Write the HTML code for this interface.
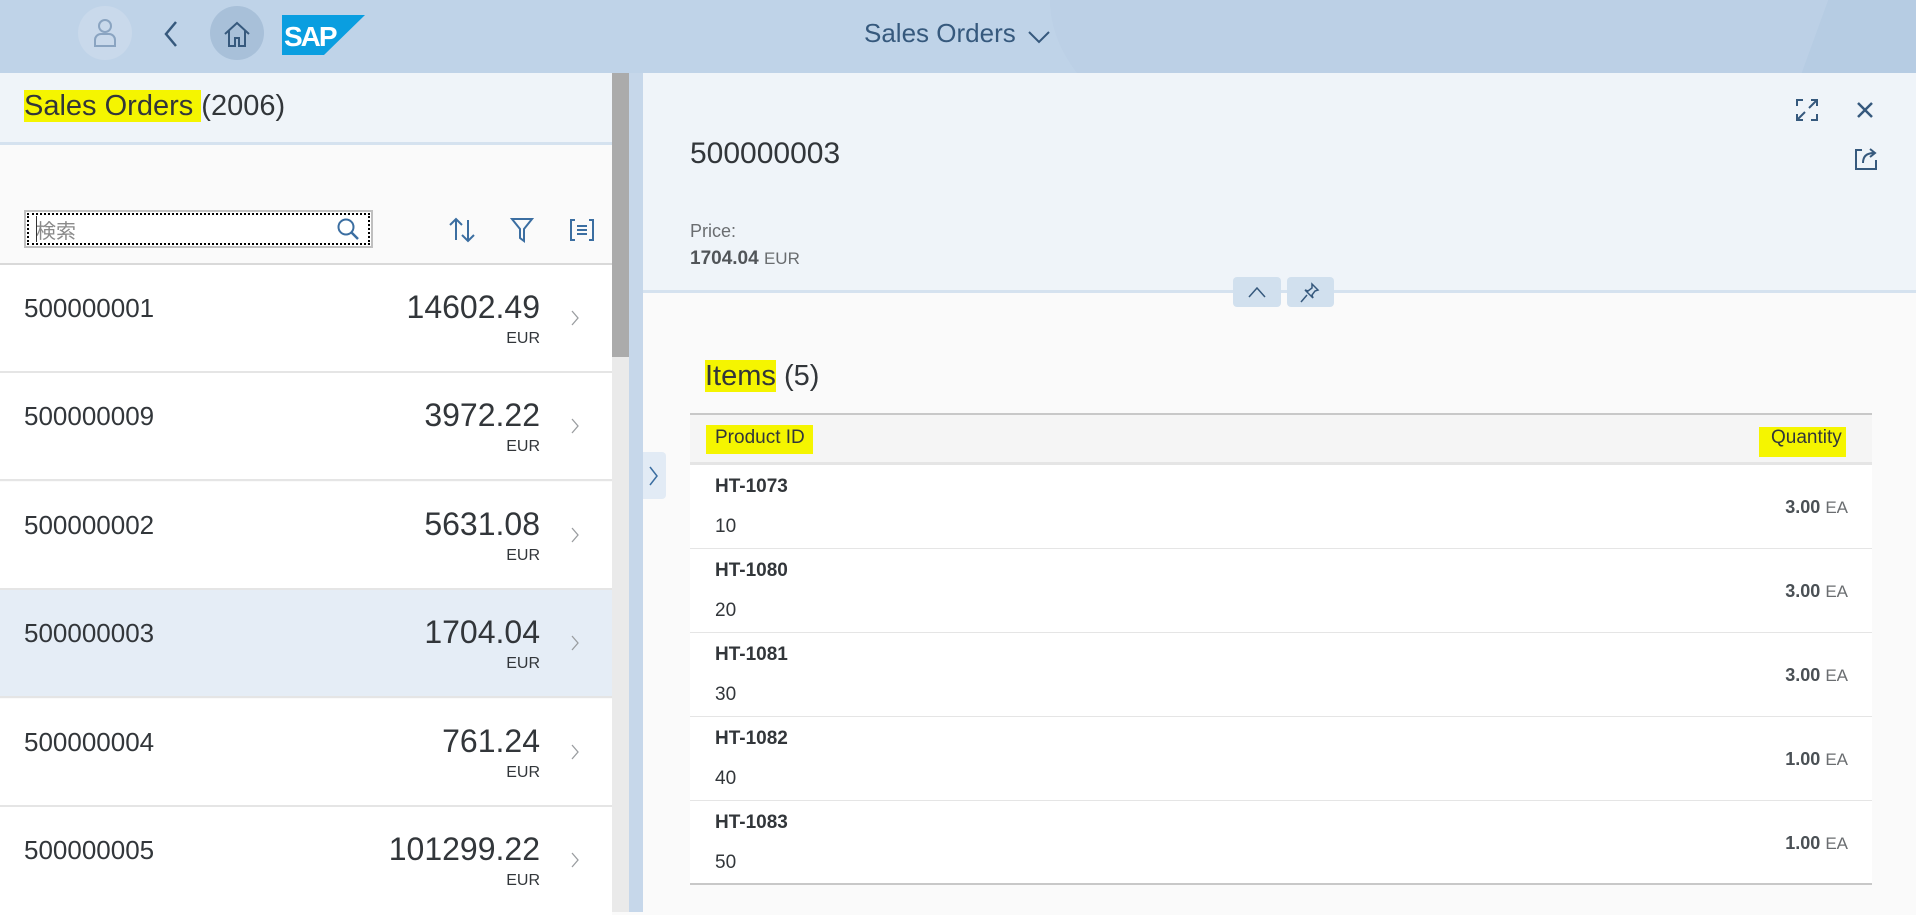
<!DOCTYPE html>
<html><head><meta charset="utf-8"><style>
*{box-sizing:border-box;margin:0;padding:0}
body{width:1916px;height:912px;overflow:hidden;font-family:"Liberation Sans","Noto Sans CJK JP",sans-serif;color:#32363a;background:#fafafa;position:relative}
.abs{position:absolute}
.hl{background:#f5f500}
.row{position:absolute;left:0;width:612px;height:108px;border-bottom:2px solid #e5e5e5;background:#fff}
.row .id{position:absolute;left:24px;top:28px;font-size:26px}
.row .amt{position:absolute;right:72px;top:24px;font-size:32px}
.row .cur{position:absolute;right:72px;top:65px;font-size:16px}
.row .chev{position:absolute;left:570px;top:44px}
.trow{position:absolute;left:690px;width:1182px;height:84px;border-bottom:1px solid #e5e5e5;background:#fff}
.trow .p{position:absolute;left:25px;top:11px;font-size:19px;font-weight:bold}
.trow .n{position:absolute;left:25px;top:51px;font-size:19px}
.trow .q{position:absolute;right:24px;top:32px;font-size:18px;font-weight:bold;color:#4a5055}
.trow .q span{font-weight:normal;font-size:17px;color:#6a6d70}
</style></head><body>
<div class="abs" style="left:0;top:0;width:1916px;height:73px;background:#bfd3e8;overflow:hidden">
 <div class="abs" style="left:1050px;top:-200px;width:780px;height:400px;border-radius:50%;background:#bcd0e6"></div>
 <div class="abs" style="left:1810px;top:-100px;width:300px;height:300px;background:#b6cce3;transform:skewX(-20deg)"></div>
 <div class="abs" style="left:78px;top:6px;width:54px;height:54px;border-radius:50%;background:#c9d9eb"></div>
 <svg class="abs" style="left:92px;top:18px" width="26" height="30" viewBox="0 0 26 30"><circle cx="13" cy="8" r="6" fill="none" stroke="#8aa4c1" stroke-width="2"/><path d="M3 28v-6a6 6 0 0 1 6-6h8a6 6 0 0 1 6 6v6z" fill="none" stroke="#8aa4c1" stroke-width="2"/></svg>
 <svg class="abs" style="left:162px;top:20px" width="18" height="28"><path d="M14 2L4 14l10 12" fill="none" stroke="#36597d" stroke-width="2.5"/></svg>
 <div class="abs" style="left:210px;top:6px;width:54px;height:54px;border-radius:50%;background:#a8c0d9"></div>
 <svg class="abs" style="left:222px;top:20px" width="30" height="28" viewBox="0 0 30 28"><path d="M3 14L15 3l12 11M7 11v15h6v-8h4v8h6V11" fill="none" stroke="#36597d" stroke-width="2"/></svg>
 <svg class="abs" style="left:282px;top:15px" width="83" height="40" viewBox="0 0 83 40"><path d="M0 0h83L42 40H0z" fill="#0a9ee0"/><text x="2" y="31" font-family="Liberation Sans" font-weight="bold" font-size="28" fill="#fff" letter-spacing="-2">SAP</text></svg>
 <div class="abs" style="left:864px;top:18px;font-size:26px;color:#36597d">Sales Orders</div>
 <svg class="abs" style="left:1028px;top:30px" width="22" height="14"><path d="M1 2l10 10 10-10" fill="none" stroke="#36597d" stroke-width="2"/></svg>
</div>
<div class="abs" style="left:0;top:73px;width:612px;height:72px;background:#eff4f9;border-bottom:3px solid #d5e2ef"></div>
<div class="abs" style="left:24px;top:90px;font-size:29px"><span class="hl">Sales Orders </span>(2006)</div>
<div class="abs" style="left:0;top:147px;width:612px;height:118px;background:#fafafa;border-bottom:2px solid #d9d9d9"></div>
<div class="abs" style="left:24px;top:210px;width:349px;height:38px;background:#fff;border:2px solid #bfbfbf;outline:2px dotted #000;outline-offset:-5px"></div>
<div class="abs" style="left:36px;top:215px;font-size:20px;color:#8a8a8a">検索</div>
<div class="abs" style="left:36px;top:216px;width:1px;height:26px;background:#333"></div>
<svg class="abs" style="left:336px;top:217px" width="24" height="24"><circle cx="10" cy="10" r="7.5" fill="none" stroke="#3b6ea1" stroke-width="2"/><path d="M15.5 15.5L22 22" stroke="#3b6ea1" stroke-width="2.5"/></svg>
<svg class="abs" style="left:448px;top:216px" width="28" height="28"><path d="M8 24V3M2 9l6-6 6 6M20 4v21M14 19l6 6 6-6" fill="none" stroke="#3b6ea1" stroke-width="2"/></svg>
<svg class="abs" style="left:510px;top:216px" width="24" height="28"><path d="M2 3h20l-8 10v12l-4-3V13z" fill="none" stroke="#3b6ea1" stroke-width="2"/></svg>
<svg class="abs" style="left:569px;top:218px" width="26" height="24"><path d="M6 2H2v20h4M20 2h4v20h-4M8 8h10M8 12h10M8 16h10" fill="none" stroke="#3b6ea1" stroke-width="2"/></svg>

<div class="row" style="top:265px"><div class="id">500000001</div><div class="amt">14602.49</div><div class="cur">EUR</div><svg class="chev" width="10" height="18"><path d="M2 2l6 7-6 7" fill="none" stroke="#9a9da0" stroke-width="1.3"/></svg></div>
<div class="row" style="top:373px"><div class="id">500000009</div><div class="amt">3972.22</div><div class="cur">EUR</div><svg class="chev" width="10" height="18"><path d="M2 2l6 7-6 7" fill="none" stroke="#9a9da0" stroke-width="1.3"/></svg></div>
<div class="row" style="top:482px"><div class="id">500000002</div><div class="amt">5631.08</div><div class="cur">EUR</div><svg class="chev" width="10" height="18"><path d="M2 2l6 7-6 7" fill="none" stroke="#9a9da0" stroke-width="1.3"/></svg></div>
<div class="row" style="top:590px;background:#e5edf6"><div class="id">500000003</div><div class="amt">1704.04</div><div class="cur">EUR</div><svg class="chev" width="10" height="18"><path d="M2 2l6 7-6 7" fill="none" stroke="#9a9da0" stroke-width="1.3"/></svg></div>
<div class="row" style="top:699px"><div class="id">500000004</div><div class="amt">761.24</div><div class="cur">EUR</div><svg class="chev" width="10" height="18"><path d="M2 2l6 7-6 7" fill="none" stroke="#9a9da0" stroke-width="1.3"/></svg></div>
<div class="row" style="top:807px;border-bottom:none"><div class="id">500000005</div><div class="amt">101299.22</div><div class="cur">EUR</div><svg class="chev" width="10" height="18"><path d="M2 2l6 7-6 7" fill="none" stroke="#9a9da0" stroke-width="1.3"/></svg></div>

<div class="abs" style="left:612px;top:73px;width:17px;height:839px;background:#eaeaea"></div>
<div class="abs" style="left:612px;top:73px;width:17px;height:284px;background:#ababab"></div>
<div class="abs" style="left:629px;top:73px;width:14px;height:839px;background:#c6d7ea"></div>
<div class="abs" style="left:643px;top:452px;width:23px;height:47px;background:#e2ebf5;border-radius:0 4px 4px 0"></div>
<svg class="abs" style="left:648px;top:465px" width="12" height="22"><path d="M2 2l7 9-7 9" fill="none" stroke="#3b6ea1" stroke-width="1.5"/></svg>

<div class="abs" style="left:643px;top:73px;width:1273px;height:220px;background:#eff4f9;border-bottom:3px solid #d5e2ef"></div>
<div class="abs" style="left:690px;top:137px;font-size:30px">500000003</div>
<div class="abs" style="left:690px;top:221px;font-size:18px;color:#6a6d70">Price:</div>
<div class="abs" style="left:690px;top:248px;font-size:19px;color:#515559"><b>1704.04</b> <span style="font-size:17px;color:#6a6d70">EUR</span></div>
<svg class="abs" style="left:1795px;top:98px" width="24" height="24"><path d="M2 8V2h6M16 2h6v6M22 16v6h-6M8 22H2v-6M14 10l7-7M10 14l-7 7M17 2h5v5M2 17v5h5" fill="none" stroke="#36597d" stroke-width="2"/></svg>
<svg class="abs" style="left:1856px;top:101px" width="18" height="18"><path d="M2 2l14 14M16 2L2 16" stroke="#36597d" stroke-width="2.5"/></svg>
<svg class="abs" style="left:1854px;top:146px" width="25" height="24"><path d="M8 4H2v19h20v-9" fill="none" stroke="#36597d" stroke-width="2"/><path d="M9 17c0-7 4-10 11-10M16 3l5 4-5 4" fill="none" stroke="#36597d" stroke-width="2"/></svg>
<div class="abs" style="left:1233px;top:277px;width:48px;height:30px;background:#d1e0ee;border-radius:4px"></div>
<svg class="abs" style="left:1247px;top:285px" width="20" height="14"><path d="M2 12l8-9 8 9" fill="none" stroke="#36597d" stroke-width="1.5"/></svg>
<div class="abs" style="left:1287px;top:277px;width:47px;height:30px;background:#d1e0ee;border-radius:4px"></div>
<svg class="abs" style="left:1300px;top:282px" width="20" height="22"><path d="M12 2l6 6-3 1-3 4 1 3-8-8 3 1 4-3zM7 13l-6 7" fill="none" stroke="#36597d" stroke-width="1.5"/></svg>

<div class="abs" style="left:705px;top:360px;font-size:29px"><span class="hl">Items</span> (5)</div>
<div class="abs" style="left:690px;top:413px;width:1182px;height:52px;background:#f5f5f5;border-top:2px solid #c8c8c8;border-bottom:3px solid #e5e5e5"></div>
<div class="abs hl" style="left:706px;top:425px;font-size:19px;padding:2px 8px 5px 9px">Product ID</div>
<div class="abs hl" style="left:1759px;top:427px;font-size:19px;padding:0 4px 8px 12px">Quantity</div>

<div class="trow" style="top:465px"><div class="p">HT-1073</div><div class="n">10</div><div class="q">3.00 <span>EA</span></div></div>
<div class="trow" style="top:549px"><div class="p">HT-1080</div><div class="n">20</div><div class="q">3.00 <span>EA</span></div></div>
<div class="trow" style="top:633px"><div class="p">HT-1081</div><div class="n">30</div><div class="q">3.00 <span>EA</span></div></div>
<div class="trow" style="top:717px"><div class="p">HT-1082</div><div class="n">40</div><div class="q">1.00 <span>EA</span></div></div>
<div class="trow" style="top:801px;border-bottom:2px solid #c8c8c8"><div class="p">HT-1083</div><div class="n">50</div><div class="q">1.00 <span>EA</span></div></div>
</body></html>
